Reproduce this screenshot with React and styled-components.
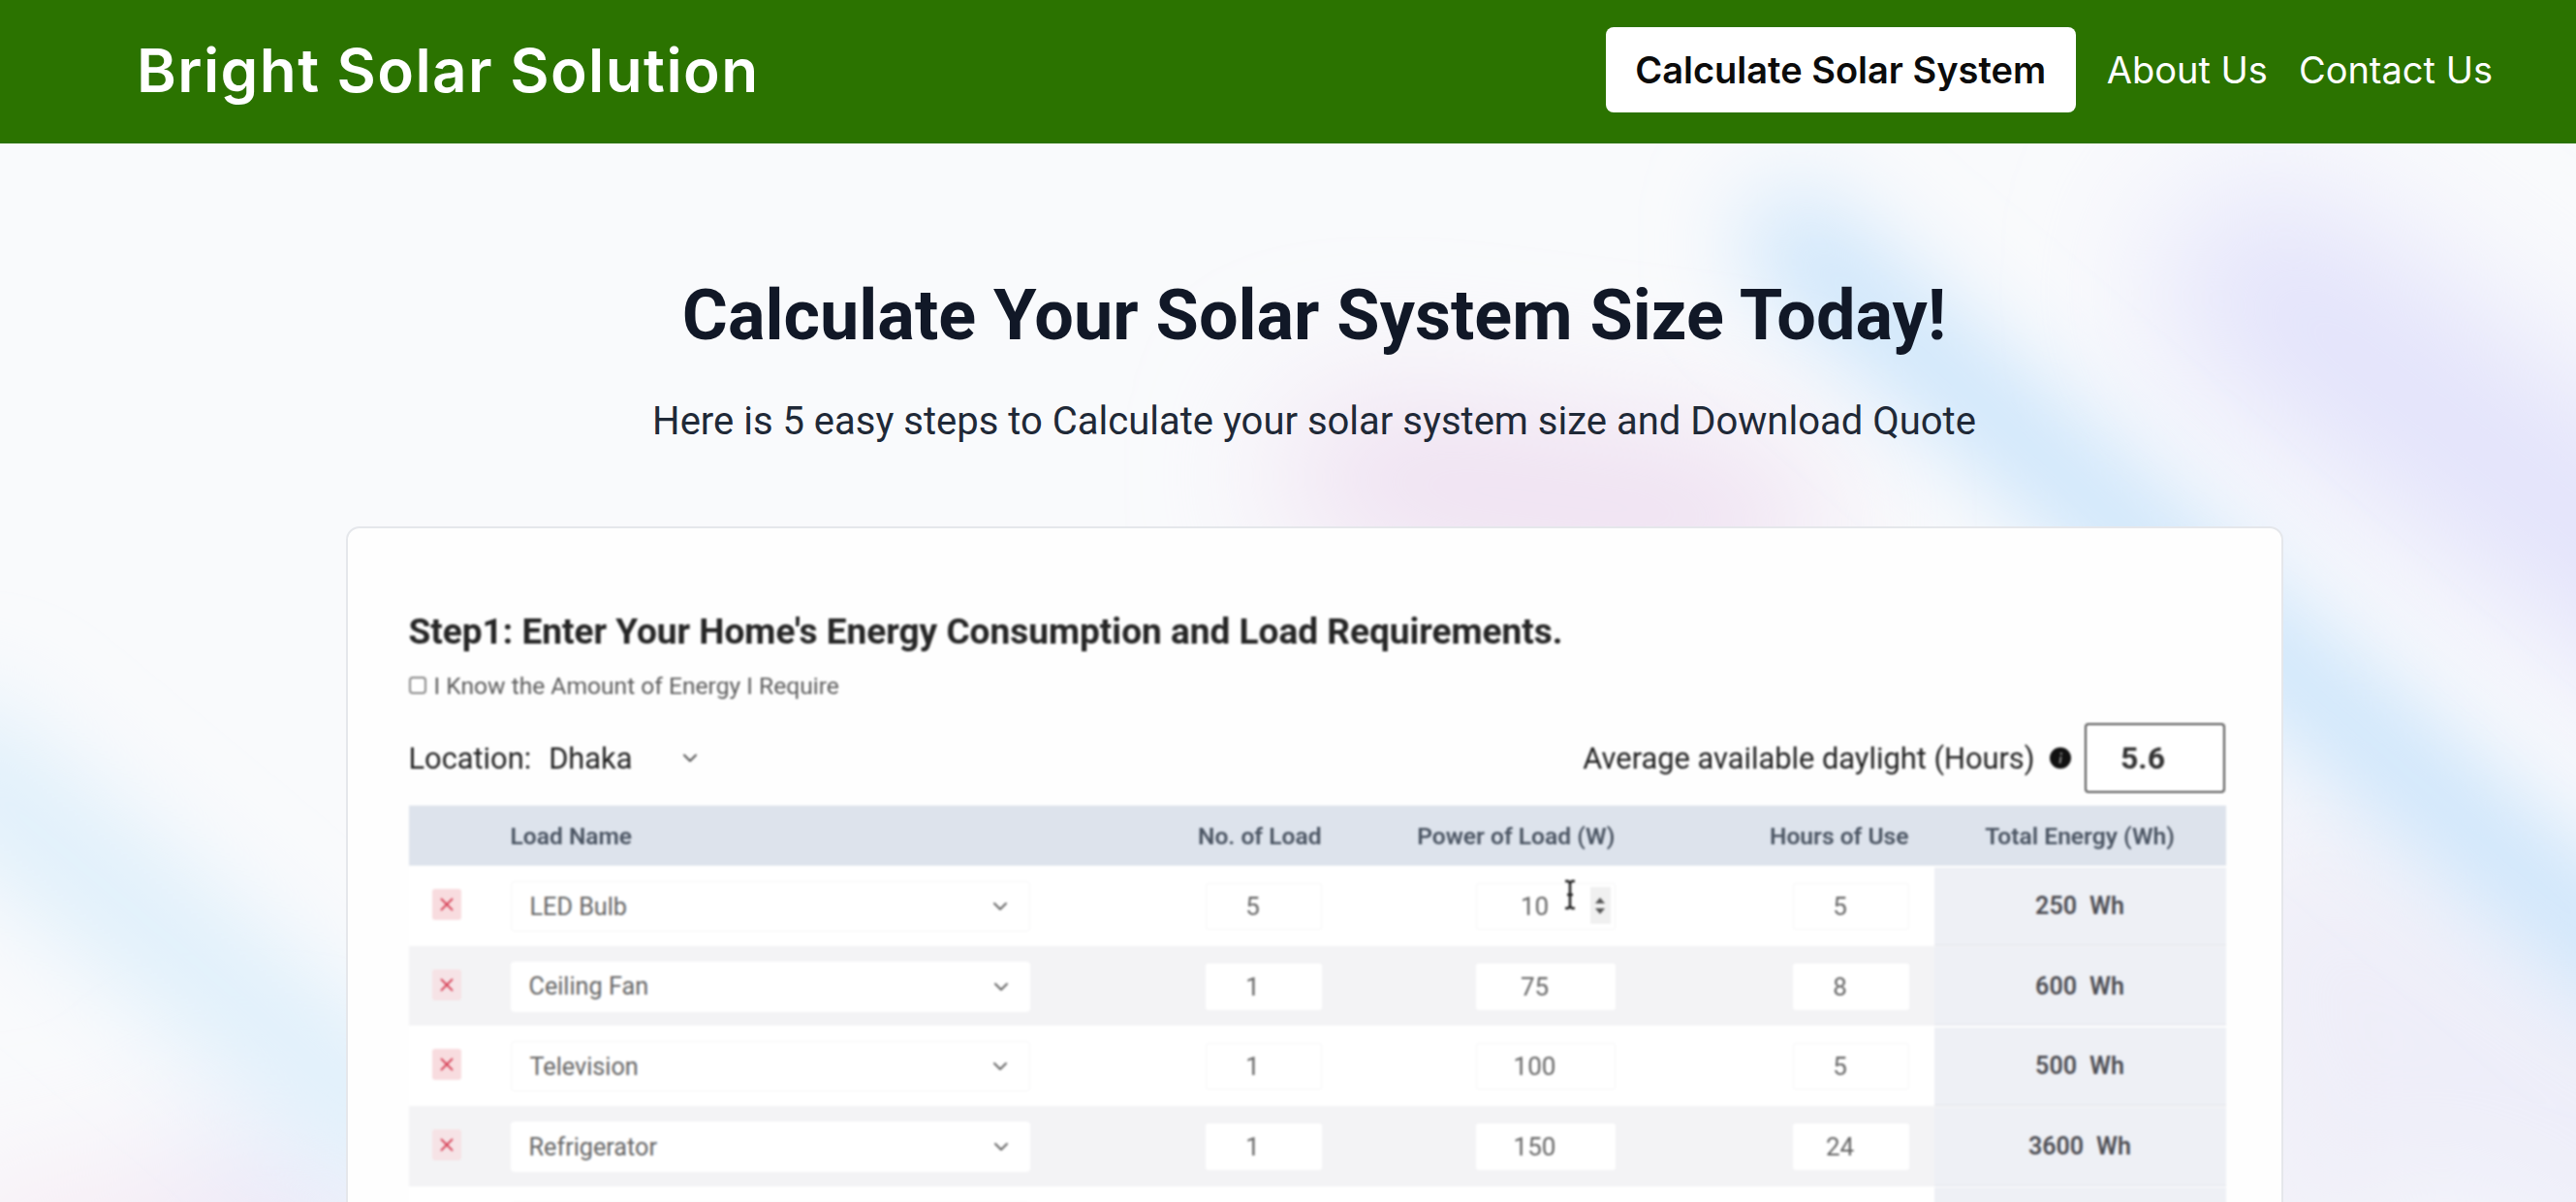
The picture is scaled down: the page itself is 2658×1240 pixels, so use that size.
import styled, { createGlobalStyle } from "styled-components";
import { ChevronDown, X } from "lucide-react";

const rows = [
  { name: "LED Bulb", count: 5, power: 10, hours: 5, total: 250, active: true },
  { name: "Ceiling Fan", count: 1, power: 75, hours: 8, total: 600 },
  { name: "Television", count: 1, power: 100, hours: 5, total: 500 },
  { name: "Refrigerator", count: 1, power: 150, hours: 24, total: 3600 },
];

export default function App() {
  return (
    <Page>
      <GlobalStyle />
      <Backdrop viewBox="0 0 2658 1240" preserveAspectRatio="none" aria-hidden="true">
        <defs>
          <filter id="soft" x="-30%" y="-30%" width="160%" height="160%">
            <feGaussianBlur stdDeviation="50" />
          </filter>
          <filter id="softer" x="-30%" y="-30%" width="160%" height="160%">
            <feGaussianBlur stdDeviation="75" />
          </filter>
        </defs>
        <g filter="url(#softer)" fill="none" strokeLinecap="round">
          <path d="M2340 300 L2800 640" stroke="#e2e2fb" strokeWidth="220" />
          <path d="M1400 490 L1800 540" stroke="#eddcef" strokeWidth="150" />
          <path d="M2400 1000 L2800 1240" stroke="#eeeef9" strokeWidth="300" />
          <path d="M2380 900 L2380 1300" stroke="#efeef8" strokeWidth="160" />
          <path d="M0 1300 L360 1290" stroke="#f6e6f1" strokeWidth="120" />
          <path d="M260 1220 L360 1260" stroke="#e8e8f9" strokeWidth="150" />
        </g>
        <g filter="url(#soft)" fill="none" strokeLinecap="round">
          <path d="M1850 250 L2176 530 L2720 1000" stroke="#c8e3fb" strokeWidth="100" />
          <path d="M-40 790 L200 990 L400 1160" stroke="#e0f0fb" strokeWidth="140" />
        </g>
      </Backdrop>

      <Header>
        <Brand>Bright Solar Solution</Brand>
        <Nav>
          <CalcLink>Calculate Solar System</CalcLink>
          <NavLink>About Us</NavLink>
          <NavLink>Contact Us</NavLink>
        </Nav>
      </Header>

      <Main>
        <Heading>Calculate Your Solar System Size Today!</Heading>
        <Lead>Here is 5 easy steps to Calculate your solar system size and Download Quote</Lead>

        <Card>
          <Frame>
            <StepTitle>Step1: Enter Your Home's Energy Consumption and Load Requirements.</StepTitle>
            <CheckRow>
              <CheckBox />I Know the Amount of Energy I Require
            </CheckRow>

            <Toolbar>
              <LocationGroup>
                <span>Location:</span>
                <LocationValue>Dhaka</LocationValue>
                <ChevronDown size={24} strokeWidth={2} color="#555" />
              </LocationGroup>
              <DaylightGroup>
                <span>Average available daylight (Hours)</span>
                <InfoDot viewBox="0 0 24 24">
                  <circle cx="12" cy="12" r="11" fill="#111" />
                  <path d="M12.6 10.5 11.4 17.5" stroke="#888" strokeWidth="2" />
                  <circle cx="12.8" cy="7.5" r="1.2" fill="#888" />
                </InfoDot>
                <DaylightInput readOnly value="5.6" />
              </DaylightGroup>
            </Toolbar>

            <HeaderRow>
              <span />
              <LoadHead>Load Name</LoadHead>
              <span>No. of Load</span>
              <span>Power of Load (W)</span>
              <span>Hours of Use</span>
              <TotalHead>Total Energy (Wh)</TotalHead>
            </HeaderRow>

            {rows.map((row, i) => (
              <Row key={row.name} $odd={i % 2 === 1}>
                <RemoveButton $odd={i % 2 === 1}>
                  <X size={22} strokeWidth={2} color="#d8475c" />
                </RemoveButton>
                <LoadSelect $odd={i % 2 === 1}>
                  {row.name}
                  <ChevronDown size={24} strokeWidth={2} color="#666" />
                </LoadSelect>
                <NumberBox $odd={i % 2 === 1} $width={120} readOnly value={row.count} />
                <PowerCell>
                  <NumberBox $odd={i % 2 === 1} $width={144} readOnly value={row.power} />
                  {row.active && (
                    <>
                      <TextCursor viewBox="0 0 16 32">
                        <path
                          d="M3 2h3l2 2 2-2h3M8 4v24M3 30h3l2-2 2 2h3M5 16h6"
                          fill="none"
                          stroke="#222"
                          strokeWidth="2.6"
                        />
                      </TextCursor>
                      <Spinner>
                        <i />
                        <b />
                      </Spinner>
                    </>
                  )}
                </PowerCell>
                <NumberBox $odd={i % 2 === 1} $width={120} readOnly value={row.hours} />
                <TotalCell>
                  {row.total}
                  <span>Wh</span>
                </TotalCell>
              </Row>
            ))}

            <Row>
              <RemoveButton />
              <LoadSelect />
              <NumberBox $width={120} readOnly value="" />
              <NumberBox $width={144} readOnly value="" />
              <NumberBox $width={120} readOnly value="" />
              <TotalCell />
            </Row>
          </Frame>
        </Card>
      </Main>
    </Page>
  );
}

const GlobalStyle = createGlobalStyle`
  html, body {
    margin: 0;
    height: 100%;
    overflow: hidden;
  }

  * {
    box-sizing: border-box;
  }
`;

const Page = styled.div`
  position: relative;
  height: 100vh;
  overflow: hidden;
  background: #f9fafc;
  font-family: "Roboto", sans-serif;
`;

const Backdrop = styled.svg`
  position: absolute;
  top: 0;
  left: 0;
  width: 100%;
  height: 100%;
`;

const Header = styled.header`
  position: relative;
  display: flex;
  align-items: center;
  justify-content: space-between;
  height: 148px;
  padding: 0 86px 4px 141px;
  background: #2b7300;
  font-family: "Inter", sans-serif;
`;

const Brand = styled.div`
  font-size: 62px;
  font-weight: 600;
  letter-spacing: 1.42px;
  color: #ffffff;
`;

const Nav = styled.nav`
  display: flex;
  align-items: center;
  gap: 32px;
`;

const CalcLink = styled.a`
  display: flex;
  align-items: center;
  justify-content: center;
  width: 485px;
  height: 88px;
  border-radius: 8px;
  background: #ffffff;
  color: #0b0b0b;
  font-size: 38px;
  font-weight: 600;
`;

const NavLink = styled.a`
  color: #ffffff;
  font-size: 38px;
  font-weight: 400;
`;

const Main = styled.main`
  position: relative;
  display: flex;
  flex-direction: column;
  align-items: center;
  padding: 138px 0 0 54px;
`;

const Heading = styled.h1`
  margin: 0;
  font-size: 72px;
  line-height: 80px;
  font-weight: 700;
  color: #111827;
`;

const Lead = styled.p`
  margin: 41px 0 0;
  font-size: 40px;
  line-height: 56px;
  color: #1f2937;
`;

const Card = styled.section`
  width: 1999px;
  margin-top: 80px;
  padding: 85px 57px 0 63px;
  border: 2px solid #e5e7eb;
  border-radius: 14px;
  background: #fefefe;
`;

const Frame = styled.div`
  filter: blur(0.9px);
`;

const StepTitle = styled.h2`
  margin: 0;
  font-size: 37px;
  line-height: 44px;
  font-weight: 700;
  color: #262626;
`;

const CheckRow = styled.label`
  display: flex;
  align-items: center;
  gap: 8px;
  height: 30px;
  margin-top: 18px;
  font-size: 24.6px;
  color: #5c5c5c;
`;

const CheckBox = styled.span`
  width: 18px;
  height: 18px;
  border: 2px solid #8a8a8a;
  border-radius: 4px;
  background: #ffffff;
`;

const Toolbar = styled.div`
  display: flex;
  align-items: center;
  justify-content: space-between;
  height: 72px;
  margin-top: 24px;
  font-size: 30.8px;
  color: #222222;
`;

const LocationGroup = styled.div`
  display: flex;
  align-items: center;
`;

const LocationValue = styled.span`
  width: 134px;
  margin-left: 18px;
`;

const DaylightGroup = styled.div`
  display: flex;
  align-items: center;
  margin-right: 1px;
`;

const InfoDot = styled.svg`
  width: 24px;
  height: 24px;
  margin: 0 13px 0 14px;
`;

const DaylightInput = styled.input`
  width: 145px;
  height: 72px;
  padding: 0 24px 0 0;
  border: 2px solid #555555;
  border-radius: 4px;
  background: #ffffff;
  text-align: center;
  font-family: "Roboto", sans-serif;
  font-size: 32px;
  font-weight: 700;
  color: #333333;
`;

const gridColumns = "105px 536px 301px 303px 303px 327px";

const HeaderRow = styled.div`
  display: grid;
  grid-template-columns: ${gridColumns};
  align-items: center;
  justify-items: end;
  height: 62px;
  margin-top: 13px;
  background: #dde3ec;
  font-size: 24.6px;
  font-weight: 600;
  color: #4b5563;
`;

const LoadHead = styled.span`
  justify-self: start;
`;

const TotalHead = styled.span`
  justify-self: center;
  padding-left: 26px;
`;

const Row = styled.div`
  display: grid;
  grid-template-columns: ${gridColumns};
  align-items: center;
  justify-items: end;
  height: 82.7px;
  padding-top: 1.5px;
  background: ${(props) => (props.$odd ? "#f3f3f5" : "#ffffff")};
`;

const RemoveButton = styled.button`
  display: flex;
  align-items: center;
  justify-content: center;
  justify-self: start;
  width: 30px;
  height: 32px;
  margin: -4px 0 0 24px;
  padding: 0;
  border: none;
  border-radius: 3px;
  background: ${(props) => (props.$odd ? "#f6e3e6" : "#f8dcdf")};
`;

const LoadSelect = styled.div`
  display: flex;
  align-items: center;
  justify-content: space-between;
  justify-self: stretch;
  height: 52px;
  padding: 0 18px 0 19px;
  border: ${(props) => (props.$odd ? "none" : "1px solid #f6f6f7")};
  border-radius: 4px;
  background: #ffffff;
  font-size: 25.2px;
  color: #666666;
`;

const NumberBox = styled.input`
  width: ${(props) => props.$width}px;
  height: 48px;
  padding: 0 22px 0 0;
  border: ${(props) => (props.$odd ? "none" : "1px solid #f6f6f7")};
  border-radius: 3px;
  background: #ffffff;
  text-align: center;
  font-family: "Roboto", sans-serif;
  font-size: 26px;
  color: #666666;
`;

const PowerCell = styled.div`
  position: relative;
  display: flex;
`;

const TextCursor = styled.svg`
  position: absolute;
  top: -4px;
  left: 89px;
  width: 16px;
  height: 32px;
`;

const Spinner = styled.div`
  position: absolute;
  top: 4px;
  right: 5px;
  display: flex;
  flex-direction: column;
  align-items: center;
  justify-content: center;
  gap: 5px;
  width: 21px;
  height: 38px;
  background: #f0f0f0;

  i,
  b {
    width: 0;
    height: 0;
    border-left: 5px solid transparent;
    border-right: 5px solid transparent;
  }

  i {
    border-bottom: 6px solid #555555;
  }

  b {
    border-top: 6px solid #555555;
  }
`;

const TotalCell = styled.div`
  display: flex;
  align-items: center;
  justify-content: center;
  justify-self: stretch;
  gap: 13px;
  height: 100%;
  margin-left: 26px;
  padding-top: 1px;
  border-bottom: 2px solid #e9ebf0;
  background: #eef0f5;
  font-size: 25px;
  font-weight: 600;
  color: #4f4f55;
`;
